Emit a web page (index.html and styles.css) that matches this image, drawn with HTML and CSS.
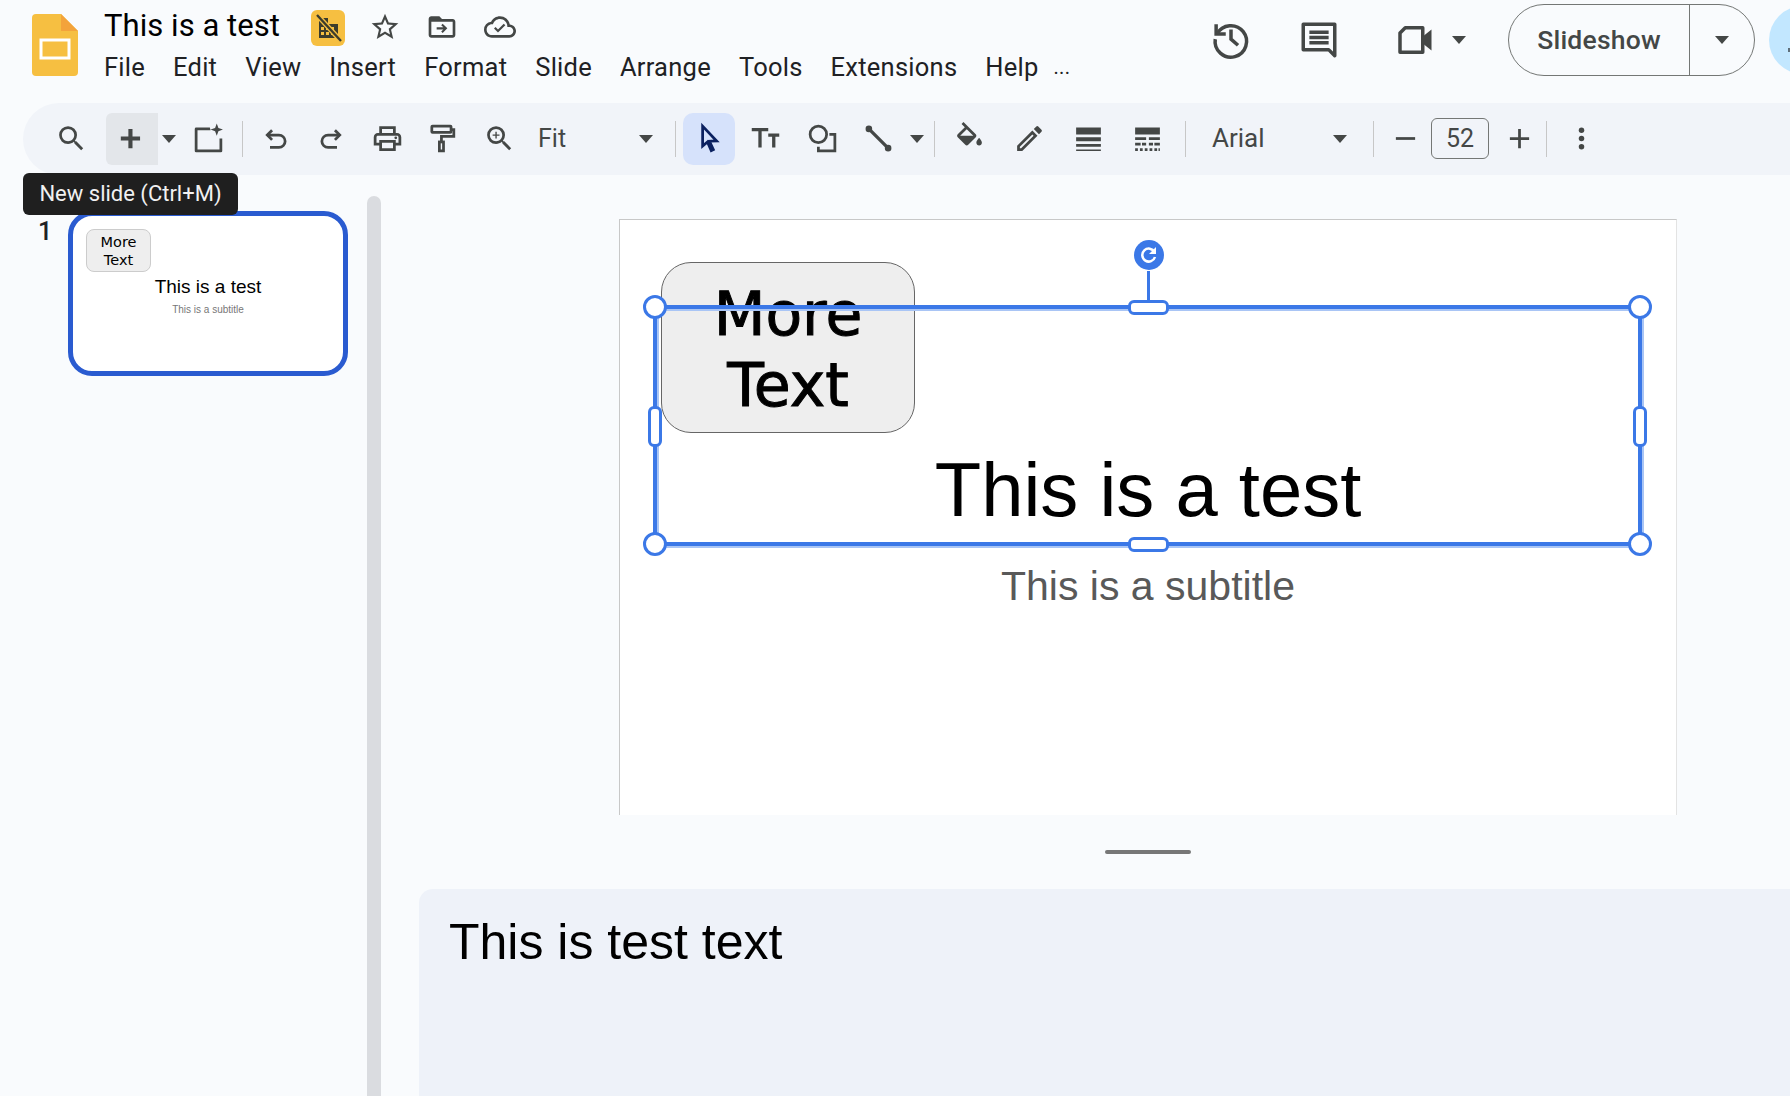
FILE: index.html
```html
<!DOCTYPE html>
<html lang="en">
    <head>
        <title>This is a test - Google Slides</title>
        <meta charset="UTF-8" />
        <link rel="stylesheet" href="styles.css">
    </head>
    <body>
        <header class="header">
            <svg class="logo" viewBox="0 0 46 62">
                <path fill="#f6bf41" d="M4 0H29L46 17V58a4 4 0 0 1-4 4H4a4 4 0 0 1-4-4V4a4 4 0 0 1 4-4z"/>
                <path fill="#f3a33b" d="M29 0L46 17H29z"/>
                <rect x="9" y="26" width="28" height="18" fill="none" stroke="#fff" stroke-width="3"/>
            </svg>
            <div class="doc">
                <div class="title-row">
                    <span class="doc-title">This is a test</span>
                    <svg class="badge" viewBox="0 0 34 36">
                        <rect width="34" height="36" rx="6" fill="#f6bf41"/>
                        <path fill="#3c3c2c" d="M8 8h9v6h10v14H8z"/>
                        <path fill="#f6bf41" d="M10 17h3v3h-3zM15 17h3v3h-3zM20 17h3v3h-3zM10 22h3v3h-3zM15 22h3v3h-3zM20 22h3v3h-3z"/>
                        <path stroke="#f6bf41" stroke-width="5" d="M7 6L30 31"/>
                        <path stroke="#3c3c2c" stroke-width="2.4" d="M6 5L30 31"/>
                    </svg>
                    <svg class="doc-icon star" viewBox="0 0 24 24"><path d="M22 9.24l-7.19-.62L12 2 9.19 8.63 2 9.24l5.46 4.73L5.82 21 12 17.27 18.18 21l-1.63-7.03L22 9.24zM12 15.4l-3.76 2.27 1-4.28-3.32-2.88 4.38-.38L12 6.1l1.71 4.04 4.38.38-3.32 2.88 1 4.28L12 15.4z"/></svg>
                    <svg class="doc-icon folder" viewBox="0 0 24 24"><path d="M20 6h-8l-2-2H4c-1.1 0-2 .9-2 2v12c0 1.1.9 2 2 2h16c1.1 0 2-.9 2-2V8c0-1.1-.9-2-2-2zm0 12H4V8h16v10z"/><path d="M12.5 9.5l-1.1 1.1 1.6 1.6H8v1.6h5l-1.6 1.6 1.1 1.1 3.5-3.5z"/></svg>
                    <svg class="doc-icon cloud" viewBox="0 0 24 24"><path d="M19.35 10.04A7.49 7.49 0 0 0 12 4C9.11 4 6.6 5.64 5.35 8.04A5.994 5.994 0 0 0 0 14c0 3.31 2.69 6 6 6h13c2.76 0 5-2.24 5-5 0-2.64-2.05-4.78-4.65-4.96zM19 18H6c-2.21 0-4-1.79-4-4s1.79-4 4-4h.71C7.37 7.69 9.48 6 12 6c3.04 0 5.5 2.46 5.5 5.5v.5H19c1.66 0 3 1.34 3 3s-1.34 3-3 3z"/><path d="M10.5 16.2l-3-3 1.2-1.2 1.8 1.8 4.3-4.3 1.2 1.2z"/></svg>
                </div>
                <nav class="menu">
                    <span>File</span>
                    <span>Edit</span>
                    <span>View</span>
                    <span>Insert</span>
                    <span>Format</span>
                    <span>Slide</span>
                    <span>Arrange</span>
                    <span>Tools</span>
                    <span>Extensions</span>
                    <span>Help</span>
                    <span class="menu-more">...</span>
                </nav>
            </div>
            <div class="actions">
                <svg class="action-icon stroke" viewBox="0 1 24 24" stroke-width="2"><path d="M3.500 4v5.500H9"/><path d="M4 9.500A9 9 0 1 1 3 12.500"/><path d="M12 7v5.500l4 3.500"/></svg>
                <svg class="action-icon stroke comment" viewBox="0 0 24 24" stroke-width="2"><path d="M3 3h18v18l-3.500-3.500H3z" stroke-linejoin="round"/><path d="M6.500 7.500h11M6.500 10.500h11M6.500 13.500h11"/></svg>
                <svg class="action-icon video" viewBox="0 0 24 24"><path fill="none" stroke="#444746" stroke-width="2" stroke-linejoin="round" d="M7 5h10v14H4V8z"/><path fill="#444746" d="M17 10l5-4v12l-5-4z"/></svg>
                <span class="caret video-caret"></span>
                <div class="slideshow">
                    <span class="slideshow-label">Slideshow</span>
                    <span class="slideshow-more"><span class="caret"></span></span>
                </div>
                <div class="avatar"></div>
            </div>
        </header>

        <div class="toolbar">
            <button class="tool tool-search"><svg viewBox="0 0 24 24"><path d="M15.500 14h-.79l-.28-.27A6.471 6.471 0 0 0 16 9.500 6.500 6.500 0 1 0 9.500 16c1.610 0 3.090-.59 4.230-1.570l.27.28v.79l5 4.990L20.490 19l-4.990-5zm-6 0C7.010 14 5 11.990 5 9.500S7.010 5 9.500 5 14 7.010 14 9.500 11.990 14 9.500 14z"/></svg></button>
            <button class="tool tool-hover"><svg viewBox="1.500 0 24 24"><path d="M19 13.500h-5.500V19h-3v-5.500H5v-3h5.500V5h3v5.500H19z"/></svg></button>
            <span class="caret-box"><span class="caret"></span></span>
            <button class="tool"><svg viewBox="0.500 0 24 24"><path d="M13.500 4H3.500a1 1 0 0 0-1 1v16a1 1 0 0 0 1 1h18a1 1 0 0 0 1-1v-9h-2v8h-16V6h9.500z"/><path d="M18.500 1l1.200 3.300L23 5.500l-3.300 1.200L18.500 10l-1.200-3.300L14 5.500l3.300-1.200z"/></svg></button>
            <span class="sep"></span>
            <button class="tool"><svg class="stroke" viewBox="0 0 24 24" stroke-width="2"><path d="M9.500 6L6 9.500l3.500 3.500"/><path d="M6 9.500h8.500a4.500 4.500 0 0 1 0 9H8"/></svg></button>
            <button class="tool"><svg class="stroke" viewBox="0 0 24 24" stroke-width="2"><path d="M14.500 6L18 9.500 14.500 13"/><path d="M18 9.500H9.500a4.500 4.500 0 0 0 0 9H16"/></svg></button>
            <button class="tool"><svg viewBox="0 0 24 24"><path d="M19 8h-1V3H6v5H5c-1.660 0-3 1.340-3 3v6h4v4h12v-4h4v-6c0-1.660-1.340-3-3-3zM8 5h8v3H8V5zm8 12v2H8v-4h8v2zm2-2v-2H6v2H4v-4c0-.55.45-1 1-1h14c.55 0 1 .45 1 1v4h-2z"/><circle cx="18" cy="11.500" r="1"/></svg></button>
            <button class="tool"><svg class="stroke" viewBox="1.500 0 24 24" stroke-width="2"><rect x="5" y="3" width="14" height="4.500" rx=".5"/><path d="M19 5.500h2v5h-9v4"/><rect x="10.500" y="14.500" width="3" height="6.500"/></svg></button>
            <button class="tool"><svg viewBox="0 0 24 24"><path d="M15.500 14h-.79l-.28-.27A6.471 6.471 0 0 0 16 9.500 6.500 6.500 0 1 0 9.500 16c1.610 0 3.090-.59 4.230-1.570l.27.28v.79l5 4.990L20.490 19l-4.990-5zm-6 0C7.010 14 5 11.990 5 9.500S7.010 5 9.500 5 14 7.010 14 9.500 11.990 14 9.500 14z"/><path d="M12 10h-2v2H9v-2H7V9h2V7h1v2h2v1z"/></svg></button>
            <div class="select select-zoom"><span>Fit</span><span class="caret"></span></div>
            <span class="sep sep-zoom"></span>
            <button class="tool tool-active"><svg class="stroke cursor" viewBox="0 0 24 24" stroke-width="2"><path d="M7 3v14.500l3.500-3 2.800 6.300 1.500-.7-2.800-6.100 5.200-.2z"/></svg></button>
            <button class="tool"><svg class="stroke" viewBox="0 0 24 24" stroke-width="2.400"><path d="M2 5.500h12M8 5.500V18.500M14 9.500h8M18 9.500v9"/></svg></button>
            <button class="tool tool-shape"><svg class="stroke" viewBox="0 0 24 24" stroke-width="2"><circle cx="9" cy="9" r="6"/><path d="M17 9h4v12H9v-3"/></svg></button>
            <button class="tool"><svg class="stroke" viewBox="0 0 24 24" stroke-width="2.400"><path d="M5 5l14 14"/><circle cx="5" cy="5" r="1.200" fill="#444746"/><circle cx="19" cy="19" r="1.200" fill="#444746"/></svg></button>
            <span class="caret-box"><span class="caret"></span></span>
            <span class="sep sep-line"></span>
            <button class="tool tool-fill"><svg viewBox="0 0 24 24"><path d="M16.560 8.940L7.620 0 6.210 1.410l2.380 2.380-5.150 5.150c-.59.59-.59 1.540 0 2.120l5.500 5.500c.29.29.68.44 1.060.44s.77-.15 1.060-.44l5.500-5.500c.59-.58.59-1.530 0-2.120zM5.210 10L10 5.210 14.790 10H5.210zM19 11.500s-2 2.170-2 3.500c0 1.100.9 2 2 2s2-.9 2-2c0-1.330-2-3.500-2-3.500z"/></svg></button>
            <button class="tool tool-gap"><svg viewBox="0 0 24 24"><path d="M3 17.250V21h3.750L17.810 9.940l-3.750-3.750L3 17.250zM5.920 19H5v-.92l9.060-9.060.92.92L5.920 19zM20.710 5.630l-2.340-2.340a1 1 0 0 0-1.410 0l-1.830 1.830 3.750 3.750 1.830-1.830a1 1 0 0 0 0-1.410z"/></svg></button>
            <button class="tool tool-gap"><svg viewBox="0 0 24 24"><path d="M3 4h18v5H3zM3 11h18v3H3zM3 16h18v2H3zM3 20h18v1H3z"/></svg></button>
            <button class="tool tool-gap"><svg viewBox="0 0 24 24"><path d="M3 4h18v5H3zM3 11h8v2H3zM13 11h8v2H13zM3 15h4v2H3zM8 15h3v2H8zM13 15h3v2h-3zM17 15h4v2h-4zM3 19h2v2H3zM6.500 19h2v2h-2zM10 19h2v2h-2zM13.500 19h2v2h-2zM17 19h2v2h-2zM20 19h1v2h-1z"/></svg></button>
            <span class="sep sep-dash"></span>
            <div class="select select-font"><span>Arial</span><span class="caret"></span></div>
            <span class="sep sep-font"></span>
            <button class="tool tool-minus"><svg viewBox="0 0 24 24"><path d="M19 13H5v-2h14z"/></svg></button>
            <div class="size-box">52</div>
            <button class="tool tool-plus"><svg viewBox="0 0 24 24"><path d="M19 13h-6v6h-2v-6H5v-2h6V5h2v6h6v2z"/></svg></button>
            <span class="sep sep-size"></span>
            <button class="tool tool-dots"><svg viewBox="0 0 24 24"><circle cx="12" cy="6" r="2"/><circle cx="12" cy="12" r="2"/><circle cx="12" cy="18" r="2"/></svg></button>
        </div>

        <div class="tooltip">New slide (Ctrl+M)</div>

        <main class="main">
            <aside class="sidebar">
                <span class="slide-num">1</span>
                <div class="thumb">
                    <div class="thumb-shape">More<br>Text</div>
                    <div class="thumb-title">This is a test</div>
                    <div class="thumb-sub">This is a subtitle</div>
                </div>
            </aside>
            <div class="scrollbar"></div>
            <section class="editor">
                <div class="slide">
                    <div class="shape">More<br>Text</div>
                    <div class="slide-title">This is a test</div>
                    <div class="slide-sub">This is a subtitle</div>
                    <div class="selection"></div>
                    <div class="stem"></div>
                    <svg class="rotate" viewBox="0 0 30 30">
                        <circle cx="15" cy="15" r="15" fill="#3b78e7"/>
                        <path d="M20.500 12A6.500 6.500 0 1 0 21 17" fill="none" stroke="#fff" stroke-width="2.500"/>
                        <path d="M22 7v7h-7z" fill="#fff"/>
                    </svg>
                    <span class="handle corner tl"></span>
                    <span class="handle corner tr"></span>
                    <span class="handle corner bl"></span>
                    <span class="handle corner br"></span>
                    <span class="handle wide top"></span>
                    <span class="handle wide bottom"></span>
                    <span class="handle tall left"></span>
                    <span class="handle tall right"></span>
                </div>
                <div class="notes-grip"></div>
                <div class="notes">This is test text</div>
            </section>
        </main>
    </body>
</html>
```

FILE: styles.css
```css
* {
    box-sizing: border-box;
}
body {
    font-family: Roboto, "Liberation Sans", sans-serif;
    margin: 0;
    padding: 0;
    overflow: hidden;
    width: 1790px;
    height: 1096px;
    background-color: #f9fbfd;
    color: #444746;
    display: flex;
    flex-direction: column;
    position: relative;
}
svg {
    display: block;
    fill: #444746;
}
svg.stroke {
    fill: none;
    stroke: #444746;
}
svg.cursor {
    stroke: #0b2160;
}

/* header */
.header {
    display: flex;
    height: 103px;
    flex: none;
    padding-left: 32px;
}
.logo {
    width: 46px;
    height: 62px;
    margin-top: 14px;
    flex: none;
}
.doc {
    margin-left: 26px;
}
.title-row {
    display: flex;
    align-items: center;
    height: 46px;
    padding-top: 10px;
}
.doc-title {
    font-size: 31px;
    letter-spacing: .05px;
    color: #000;
    width: 207px;
    margin-top: -6px;
}
.badge {
    width: 34px;
    height: 36px;
}
.doc-icon {
    width: 32px;
    height: 32px;
    margin-top: -2px;
}
.star {
    margin-left: 24px;
}
.folder {
    margin-left: 25px;
}
.cloud {
    margin-left: 26px;
}
.menu {
    display: flex;
    gap: 28px;
    font-size: 25.5px;
    letter-spacing: .25px;
    line-height: 32px;
    color: #202124;
    margin-top: 5px;
}
.menu-more {
    margin-left: -13px;
    font-size: 20px;
}
.actions {
    display: flex;
    align-items: center;
    margin-left: auto;
    margin-right: -47px;
    height: 80px;
    flex: none;
}
.action-icon {
    width: 42px;
    height: 42px;
    flex: none;
}
.comment {
    margin-left: 46px;
}
.video {
    margin-left: 53px;
}
.video-caret {
    margin-left: 17px;
}
.slideshow {
    display: flex;
    align-items: center;
    width: 247px;
    height: 72px;
    margin-left: 42px;
    border: 1px solid #747775;
    border-radius: 36px;
}
.slideshow-label {
    width: 181px;
    height: 100%;
    display: flex;
    align-items: center;
    justify-content: center;
    padding-bottom: 2px;
    font-size: 26.5px;
    font-weight: 500;
    letter-spacing: .2px;
    border-right: 1px solid #747775;
}
.slideshow-more {
    flex: 1;
    display: flex;
    justify-content: center;
}
.avatar {
    position: relative;
    width: 68px;
    height: 68px;
    margin-left: 14px;
    border-radius: 50%;
    background-color: #c2e7ff;
}
.avatar::before {
    content: "";
    position: absolute;
    left: 19px;
    top: 42px;
    width: 3px;
    height: 4px;
    background-color: #5f6f7a;
}
.caret {
    display: inline-block;
    width: 0;
    height: 0;
    border-left: 7.5px solid transparent;
    border-right: 7.5px solid transparent;
    border-top: 8px solid #444746;
    flex: none;
}

/* toolbar */
.toolbar {
    display: flex;
    align-items: center;
    flex: none;
    height: 72px;
    margin-left: 23px;
    padding-left: 22px;
    padding-bottom: 1px;
    background-color: #f1f4f9;
    border-radius: 36px 0 0 36px;
}
.tool {
    width: 52px;
    height: 52px;
    margin: 0 2px;
    padding: 0;
    border: 0;
    border-radius: 6px;
    background: none;
    display: flex;
    align-items: center;
    justify-content: center;
    flex: none;
}
.tool svg {
    width: 33px;
    height: 33px;
}
.tool-search {
    margin: 0 9px 0 0;
}
.tool-hover {
    margin: 0;
    background-color: #e3e6ea;
    border-radius: 6px 0 0 6px;
}
.tool-active {
    margin: 0 2px 0 0;
    background-color: #d6e2fb;
    border-radius: 10px;
}
.tool-shape {
    margin-left: 3px;
}
.tool-fill {
    margin: 0 2px 0 4px;
}
.tool-gap {
    margin: 0 1px 0 6px;
}
.caret-box {
    width: 22px;
    display: flex;
    justify-content: center;
    flex: none;
}
.sep {
    width: 1px;
    height: 36px;
    background-color: #c7c7c7;
    margin: 0 4px 0 6px;
    flex: none;
}
.sep-zoom {
    margin: 0 7px 0 22.5px;
}
.sep-line {
    margin: 0 4px 0 6px;
}
.sep-dash {
    margin: 0 4px 0 11px;
}
.sep-font {
    margin: 0 4px 0 26.5px;
}
.sep-size {
    margin: 0 4px 0 7px;
}
.select {
    display: flex;
    align-items: center;
    justify-content: space-between;
    flex: none;
}
.select-zoom {
    width: 114.5px;
    font-size: 25px;
    margin-left: 11px;
}
.select-font {
    width: 134.5px;
    font-size: 26px;
    margin-left: 22px;
    line-height: 30px;
}
.select-font span:first-child {
    margin-top: -2px;
}
.tool-minus {
    width: 40px;
    margin: 0 6px 0 7px;
}
.tool-plus {
    width: 40px;
    margin: 0 0 0 10px;
}
.size-box {
    width: 58px;
    height: 41px;
    border: 1px solid #747775;
    border-radius: 6px;
    font-size: 25px;
    text-align: center;
    line-height: 39px;
    flex: none;
}
.tool-dots {
    margin-left: 4px;
}

/* sits over the sidebar */
.tooltip {
    position: absolute;
    left: 23px;
    top: 173px;
    width: 215px;
    height: 42px;
    border-radius: 6px;
    background-color: #1f1f1f;
    color: #f1f1f1;
    font-size: 22px;
    line-height: 42px;
    text-align: center;
    z-index: 5;
}

/* main area */
.main {
    display: flex;
    flex: 1;
    min-height: 0;
}
.sidebar {
    width: 367px;
    flex: none;
    display: flex;
    padding-top: 36px;
    padding-left: 38px;
}
.slide-num {
    width: 30px;
    font-size: 25px;
    font-weight: 500;
    line-height: 28px;
    margin-top: 7px;
    color: #202124;
}
.thumb {
    position: relative;
    width: 280px;
    height: 165px;
    border: 5px solid #2a5bd0;
    border-radius: 24px;
    background-color: #fff;
}
.thumb-shape {
    position: absolute;
    left: 13px;
    top: 13px;
    width: 65px;
    height: 43px;
    border: 1px solid #ccc;
    border-radius: 8px;
    background-color: #eee;
    color: #000;
    font-family: "Comic Sans MS", "DejaVu Sans", sans-serif;
    font-size: 14.5px;
    line-height: 18px;
    text-align: center;
    padding-top: 3px;
}
.thumb-title {
    position: absolute;
    left: 0;
    right: 0;
    top: 59px;
    font-family: "Liberation Sans", Arial, sans-serif;
    font-size: 19px;
    line-height: 24px;
    color: #000;
    text-align: center;
}
.thumb-sub {
    position: absolute;
    left: 0;
    right: 0;
    top: 87px;
    font-family: "Liberation Sans", Arial, sans-serif;
    font-size: 10px;
    line-height: 14px;
    color: #777;
    text-align: center;
}
.scrollbar {
    width: 14px;
    flex: none;
    margin-top: 21px;
    background-color: #dadce0;
    border-radius: 7px 7px 0 0;
}
.editor {
    flex: 1;
    min-width: 0;
    display: flex;
    flex-direction: column;
}
.slide {
    position: relative;
    flex: none;
    width: 1058px;
    height: 596px;
    margin: 44px 0 0 238px;
    background-color: #fff;
    border-top: 1px solid #c8c8c8;
    border-left: 1px solid #c8c8c8;
    border-right: 1px solid #e3e3e3;
}
.shape {
    position: absolute;
    left: 41px;
    top: 42px;
    width: 254px;
    height: 171px;
    border: 1px solid #666;
    border-radius: 30px;
    background-color: #eee;
    color: #000;
    font-family: "Comic Sans MS", "DejaVu Sans", sans-serif;
    font-size: 60px;
    -webkit-text-stroke: 1px #000;
    line-height: 71px;
    text-align: center;
    padding-top: 16px;
}
.slide-title,
.slide-sub {
    position: absolute;
    left: 34px;
    width: 988px;
    font-family: "Liberation Sans", Arial, sans-serif;
    text-align: center;
}
.slide-title {
    top: 232px;
    font-size: 76px;
    line-height: 76px;
    color: #000;
}
.slide-sub {
    top: 346px;
    font-size: 41px;
    line-height: 41px;
    color: #595959;
}
.selection {
    position: absolute;
    left: 33px;
    top: 85px;
    width: 989px;
    height: 241px;
    border: 4px solid #3b78e7;
    box-shadow: 2px 2px 0 #a9c5f5, inset 2px 2px 0 #a9c5f5;
}
.stem {
    position: absolute;
    left: 527px;
    top: 51px;
    width: 3px;
    height: 31px;
    background-color: #3b78e7;
}
.rotate {
    position: absolute;
    left: 514px;
    top: 20px;
    width: 30px;
    height: 30px;
}
.handle {
    position: absolute;
    background-color: #fff;
    border: 3px solid #3b78e7;
}
.corner {
    width: 24px;
    height: 24px;
    border-radius: 50%;
}
.tl {
    left: 23px;
    top: 75px;
}
.tr {
    left: 1008px;
    top: 75px;
}
.bl {
    left: 23px;
    top: 312px;
}
.br {
    left: 1008px;
    top: 312px;
}
.wide {
    left: 508px;
    width: 41px;
    height: 15px;
    border-radius: 6px;
}
.top {
    top: 80px;
}
.bottom {
    top: 317px;
}
.tall {
    top: 186px;
    width: 14px;
    height: 41px;
    border-radius: 6px;
}
.left {
    left: 28px;
}
.right {
    left: 1013px;
}
.notes-grip {
    flex: none;
    width: 86px;
    height: 4px;
    margin: 35px 0 0 724px;
    background-color: #777;
    border-radius: 2px;
}
.notes {
    flex: 1;
    margin: 35px 0 0 38px;
    padding: 24px 0 0 30px;
    background-color: #eef2f9;
    border-radius: 14px 0 0 0;
    color: #000;
    font-family: "Liberation Sans", Arial, sans-serif;
    font-size: 50px;
    line-height: 58px;
}
```
